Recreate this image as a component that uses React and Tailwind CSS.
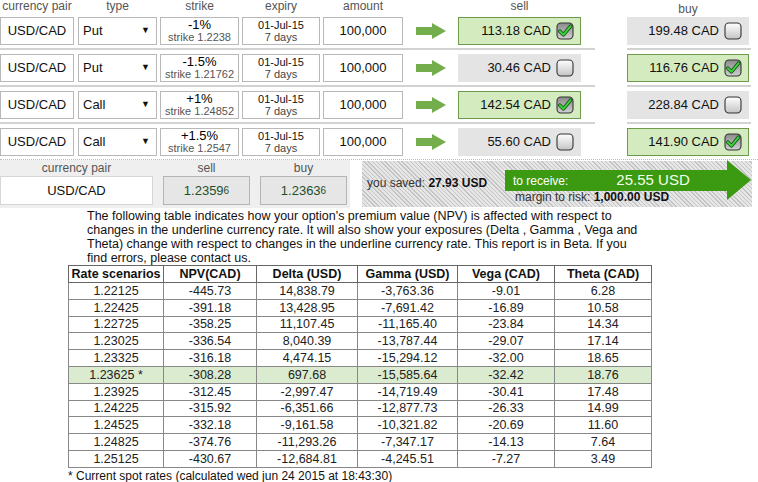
import React from "react";

const rows = [
  { type: "Put", pct: "-1%", strike: "1.2238", sell: "113.18", buy: "199.48", pick: "sell" },
  { type: "Put", pct: "-1.5%", strike: "1.21762", sell: "30.46", buy: "116.76", pick: "buy" },
  { type: "Call", pct: "+1%", strike: "1.24852", sell: "142.54", buy: "228.84", pick: "sell" },
  { type: "Call", pct: "+1.5%", strike: "1.2547", sell: "55.60", buy: "141.90", pick: "buy" },
];

const scenarios = [
  ["1.22125", "-445.73", "14,838.79", "-3,763.36", "-9.01", "6.28"],
  ["1.22425", "-391.18", "13,428.95", "-7,691.42", "-16.89", "10.58"],
  ["1.22725", "-358.25", "11,107.45", "-11,165.40", "-23.84", "14.34"],
  ["1.23025", "-336.54", "8,040.39", "-13,787.44", "-29.07", "17.14"],
  ["1.23325", "-316.18", "4,474.15", "-15,294.12", "-32.00", "18.65"],
  ["1.23625 *", "-308.28", "697.68", "-15,585.64", "-32.42", "18.76"],
  ["1.23925", "-312.45", "-2,997.47", "-14,719.49", "-30.41", "17.48"],
  ["1.24225", "-315.92", "-6,351.66", "-12,877.73", "-26.33", "14.99"],
  ["1.24525", "-332.18", "-9,161.58", "-10,321.82", "-20.69", "11.60"],
  ["1.24825", "-374.76", "-11,293.26", "-7,347.17", "-14.13", "7.64"],
  ["1.25125", "-430.67", "-12,684.81", "-4,245.51", "-7.27", "3.49"],
];

function Check({ on }) {
  return (
    <svg width="18" height="18" viewBox="0 0 18 18" className="shrink-0">
      <defs>
        <linearGradient id="cbOff" x1="0" y1="0" x2="0" y2="1">
          <stop offset="0" stopColor="#ffffff" />
          <stop offset="1" stopColor="#c4c4c4" />
        </linearGradient>
        <linearGradient id="cbOn" x1="0" y1="0" x2="0" y2="1">
          <stop offset="0" stopColor="#8a8a8a" />
          <stop offset="1" stopColor="#d0d0d0" />
        </linearGradient>
      </defs>
      <rect x="1" y="1" width="16" height="16" rx="4" fill={on ? "url(#cbOn)" : "url(#cbOff)"} stroke="#333" strokeWidth="1.1" />
      {on && (
        <>
          <path d="M3.8 9.2 L7.4 12.8 L14.6 4.2" stroke="#0f4f0f" strokeWidth="3.6" fill="none" strokeLinecap="round" strokeLinejoin="round" />
          <path d="M3.8 9.2 L7.4 12.8 L14.6 4.2" stroke="#3fcf3f" strokeWidth="2" fill="none" strokeLinecap="round" strokeLinejoin="round" />
        </>
      )}
    </svg>
  );
}

function Arrow() {
  return (
    <svg width="30" height="16" viewBox="0 0 30 16">
      <polygon points="0,4 16,4 16,0 30,8 16,16 16,12 0,12" fill="#74ad4b" />
    </svg>
  );
}

function Price({ value, on, wide }) {
  return (
    <div
      className={
        (on ? "bg-[#d4ebc0] border border-[#6f9a4c] " : "bg-[#e4e4e4] border border-[#e4e4e4] ") +
        (wide ? "w-[123px] " : "w-[122px] ") +
        "h-[28px] flex items-center justify-end gap-[5px] pr-[6px] text-[13px] text-[#111]"
      }
    >
      <span>{value} CAD</span>
      <Check on={on} />
    </div>
  );
}

export default function App() {
  return (
    <div className="w-[758px] h-[482px] bg-white overflow-hidden font-['Liberation_Sans',Arial,sans-serif] text-[#111]">
      {/* column labels */}
      <div className="flex h-[17px] text-[12px] text-[#555] leading-[12px]">
        <div className="w-[74px] text-center">currency pair</div>
        <div className="w-[79px] ml-[4px] text-center">type</div>
        <div className="w-[79px] ml-[3px] text-center">strike</div>
        <div className="w-[78px] ml-[3px] text-center">expiry</div>
        <div className="w-[80px] ml-[3px] text-center">amount</div>
        <div className="w-[123px] ml-[55px] text-center">sell</div>
        <div className="w-[122px] ml-[46px] text-center pt-[3px]">buy</div>
      </div>

      {rows.map((r, i) => (
        <div key={i} className={"flex " + (i > 0 ? "mt-[4px]" : "")}>
          <div className={"flex w-[595px] pb-[3px] " + (i < 3 ? "border-b-2 border-[#d2d2d2]" : "")}>
            <div className="w-[74px] h-[28px] border border-[#b8b8b8] flex items-center justify-center text-[13px]">USD/CAD</div>
            <div className="w-[79px] h-[28px] ml-[4px] border border-[#b8b8b8] flex items-center justify-between pl-[4px] pr-[6px] text-[13px]">
              <span>{r.type}</span>
              <span className="text-[9px]">▼</span>
            </div>
            <div className="w-[79px] h-[28px] ml-[3px] border border-[#b8b8b8] flex flex-col items-center justify-center leading-[12px]">
              <span className="text-[13px] text-black">{r.pct}</span>
              <span className="text-[11px] text-[#555]">strike {r.strike}</span>
            </div>
            <div className="w-[78px] h-[28px] ml-[3px] border border-[#b8b8b8] flex flex-col items-center justify-center leading-[12px] text-[11px]">
              <span>01-Jul-15</span>
              <span className="text-[#444]">7 days</span>
            </div>
            <div className="w-[80px] h-[28px] ml-[3px] border border-[#b8b8b8] flex items-center justify-center text-[13px]">100,000</div>
            <div className="ml-[13px] h-[28px] flex items-center">
              <Arrow />
            </div>
            <div className="ml-[12px]">
              <Price value={r.sell} on={r.pick === "sell"} wide />
            </div>
          </div>
          <div className={"ml-[32px] w-[124px] pb-[3px] " + (i < 3 ? "border-b-2 border-[#d2d2d2]" : "")}>
            <Price value={r.buy} on={r.pick === "buy"} />
          </div>
        </div>
      ))}
      <div className="border-b border-dotted border-[#bcbcbc]" />

      {/* spot rates + summary */}
      <div className="flex">
        <div className="w-[350px] h-[48px] bg-[#efefef] flex text-[12px]">
          <div className="w-[153px] flex flex-col">
            <div className="h-[16px] text-center text-[#555] leading-[16px]">currency pair</div>
            <div className="h-[29px] bg-white border border-[#d6d6d6] flex items-center justify-center text-[13px]">USD/CAD</div>
          </div>
          <div className="w-[87px] ml-[10px] flex flex-col">
            <div className="h-[16px] text-center text-[#555] leading-[16px]">sell</div>
            <div className="h-[29px] bg-[#e6e6e6] border border-[#b4b4b4] flex items-center justify-center text-[13px] text-[#1f4f2a]">
              1.2359<span className="text-[10px]">6</span>
            </div>
          </div>
          <div className="w-[87px] ml-[10px] flex flex-col">
            <div className="h-[16px] text-center text-[#555] leading-[16px]">buy</div>
            <div className="h-[29px] bg-[#e6e6e6] border border-[#b4b4b4] flex items-center justify-center text-[13px] text-[#1f4f2a]">
              1.2363<span className="text-[10px]">6</span>
            </div>
          </div>
        </div>

        <div className="ml-[12px] mt-[1px] w-[390px] h-[46px] bg-[repeating-linear-gradient(45deg,#c4c4c4_0px,#c4c4c4_1px,#e6e6e6_1px,#e6e6e6_3px)] flex">
          <div className="w-[143px] pl-[5px] pt-[13px] text-[12px] text-[#333]">
            you saved: <b className="text-[#111]">27.93 USD</b>
          </div>
          <div className="flex flex-col">
            <div className="flex items-center">
              <div className="w-[222px] h-[21px] bg-[#3c9a12] flex items-center text-white">
                <span className="pl-[8px] text-[12px]">to receive:</span>
                <span className="ml-[48px] text-[15px] text-[#f4ffe8]">25.55 USD</span>
              </div>
              <svg width="24" height="40" viewBox="0 0 24 40" className="-mt-[1px]">
                <polygon points="0,0 24,20 0,40" fill="#3c9a12" />
              </svg>
            </div>
            <div className="-mt-[12px] pl-[10px] text-[12px] text-[#333]">
              margin to risk: <b className="text-[#111]">1,000.00 USD</b>
            </div>
          </div>
        </div>
      </div>

      <p className="ml-[87px] mt-[1px] w-[555px] text-[12.5px] leading-[14px] text-[#111]">
        The following table indicates how your option's premium value (NPV) is affected with respect to changes in the
        underline currency rate. It will also show your exposures (Delta , Gamma , Vega and Theta) change with respect to
        changes in the underline currency rate. This report is in Beta. If you find errors, please contact us.
      </p>

      <table className="ml-[68px] border-collapse border border-[#333] text-[12.5px] text-center">
        <thead>
          <tr className="h-[17px]">
            <th className="w-[95px] border border-[#666] font-bold leading-[15px]">Rate scenarios</th>
            <th className="w-[93px] border border-[#666] font-bold leading-[15px]">NPV(CAD)</th>
            <th className="w-[101px] border border-[#666] font-bold leading-[15px]">Delta (USD)</th>
            <th className="w-[100px] border border-[#666] font-bold leading-[15px]">Gamma (USD)</th>
            <th className="w-[97px] border border-[#666] font-bold leading-[15px]">Vega (CAD)</th>
            <th className="w-[97px] border border-[#666] font-bold leading-[15px]">Theta (CAD)</th>
          </tr>
        </thead>
        <tbody>
          {scenarios.map((s, i) => (
            <tr key={i} className={"h-[16.8px] " + (i === 5 ? "bg-[#dbebcf]" : "")}>
              {s.map((c, j) => (
                <td key={j} className="border border-[#888] leading-[14px] text-[#222]">
                  {c}
                </td>
              ))}
            </tr>
          ))}
        </tbody>
      </table>
      <div className="ml-[68px] mt-[1px] text-[12px] leading-[14px] text-[#111]">
        * Current spot rates (calculated wed jun 24 2015 at 18:43:30)
      </div>
    </div>
  );
}
